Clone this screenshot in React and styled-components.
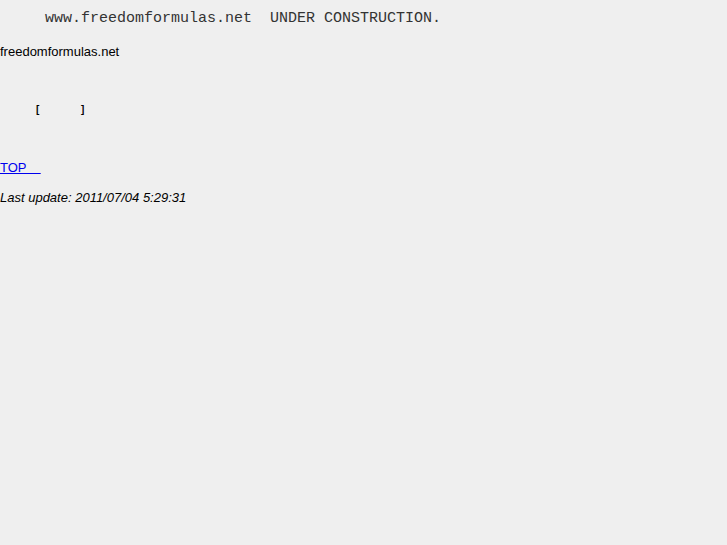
import React from 'react';
import styled, { createGlobalStyle } from 'styled-components';

const GlobalStyle = createGlobalStyle`
  html, body {
    margin: 0;
    padding: 0;
    background: #efefef;
  }
`

const Page = styled.div`
  display: flex;
  flex-direction: column;
  align-items: flex-start;
  min-height: 545px;
  background: #efefef;
  color: #000;
  font-family: "Liberation Sans", Arial, sans-serif;
  font-size: 13px;
`

const Banner = styled.div`
  white-space: pre;
  font-family: "Liberation Mono", "Courier New", monospace;
  font-size: 15px;
  line-height: 18px;
  margin-top: 10px;
  color: #333;
`

const Domain = styled.div`
  line-height: 16px;
  margin-top: 16px;
`

const Brackets = styled.div`
  white-space: pre;
  font-size: 10px;
  font-weight: bold;
  line-height: 12px;
  margin-top: 44px;
  padding-left: 36px;
`

const TopLink = styled.a`
  color: #0000ee;
  text-decoration: underline;
  white-space: pre;
  line-height: 16px;
  margin-top: 44px;
`

const Updated = styled.div`
  font-style: italic;
  line-height: 16px;
  margin-top: 14px;
`

const App = () => (
  <Page>
    <GlobalStyle />
    <Banner>{'     www.freedomformulas.net  UNDER CONSTRUCTION.'}</Banner>
    <Domain>freedomformulas.net</Domain>
    <Brackets>{'[               ]'}</Brackets>
    <TopLink href="#top">{'TOP    '}</TopLink>
    <Updated>Last update: 2011/07/04 5:29:31</Updated>
  </Page>
)

export default App;
